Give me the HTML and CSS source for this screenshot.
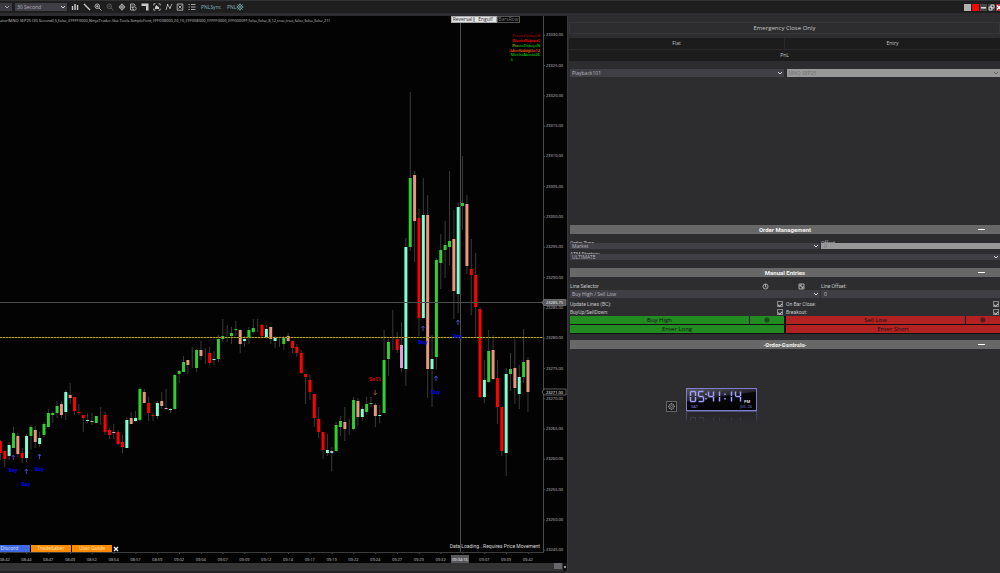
FILE: index.html
```html
<!DOCTYPE html>
<html lang="en">
<head>
<meta charset="utf-8">
<title>Chart Trader</title>
<link rel="stylesheet" href="styles.css">
</head>
<body>
<div class="app">
  <header class="toolbar">
    <button class="drop-stub" aria-label="Instrument"><svg viewBox="0 0 6 6"><path d="M1 2l2 2 2-2"/></svg></button>
    <div class="pick interval"><select aria-label="Interval"><option>30 Second</option></select><svg viewBox="0 0 6 6"><path d="M1 2l2 2 2-2"/></svg></div>
    <nav class="tools">
      <button aria-label="Chart style"><svg viewBox="0 0 8 8"><path class="thick" d="M1.500 3v4M4 1v6M6.500 2v5"/></svg></button>
      <button aria-label="Draw"><svg viewBox="0 0 8 8"><path class="thick" d="M1 1l2 2M3 3l4 4"/></svg></button>
      <button aria-label="Zoom in"><svg viewBox="0 0 8 8"><circle cx="3.300" cy="3.300" r="2.300"/><path d="M5 5l2.500 2.500M2 3.300h2.600M3.300 2v2.600"/></svg></button>
      <button class="dim" aria-label="Zoom out"><svg viewBox="0 0 8 8"><circle cx="3.300" cy="3.300" r="2.300"/><path d="M5 5l2.500 2.500M2 3.300h2.600"/></svg></button>
      <button aria-label="Crosshair"><svg viewBox="0 0 8 8"><circle cx="4" cy="4" r="2.300"/><path d="M4 .5v7M.8 4h6.400"/></svg></button>
      <button aria-label="Data"><svg viewBox="0 0 8 8"><path d="M5 7H1.500V1H5l1 1v1M2.500 3h2M2.500 4.500h1.500"/><circle cx="5.500" cy="5.500" r="1.700"/></svg></button>
      <button aria-label="Chart trader"><svg viewBox="0 0 8 8"><path class="solid" d="M.5.5h7v7H5V3H.5z"/></svg></button>
      <button aria-label="Indicators"><svg viewBox="0 0 8 8"><path d="M.8 2.500V.8h1.700M5.500.8h1.700v1.700M7.200 5.500v1.700H5.500M2.500 7.200H.8V5.500"/><path class="solid" d="M2 6V4l1.500-2L5 3.500l1 .5v2z"/></svg></button>
      <button aria-label="Strategies"><svg viewBox="0 0 8 8"><path d="M1 7l1.500-5 2.500 3 2-4"/><path class="solid" d="M2 1h1.300v1.300H2zM4.400 4.400h1.300v1.300H4.400z"/></svg></button>
      <button aria-label="Properties"><svg viewBox="0 0 8 8"><path d="M1.200 1h5.600v6.200H1.200zM2.500 2.500l3 3M5.500 2.500l-3 3"/></svg></button>
      <button aria-label="List"><svg viewBox="0 0 8 8"><path d="M.5 1.500h1.300M3 1.500h4.500M.5 4h1.300M3 4h4.500M.5 6.500h1.300M3 6.500h4.500"/></svg></button>
    </nav>
    <button class="pnl">PNLSync</button>
    <button class="pnl second">PNL<svg viewBox="0 0 8 8"><circle cx="4" cy="4" r="2.200"/><circle cx="4" cy="4" r=".6"/><path d="M4 .5v1.500M4 6v1.500M.5 4h1.500M6 4h1.500M1.500 1.500l1 1M5.500 5.500l1 1M1.500 6.500l1-1M5.500 2.500l1-1"/></svg></button>
    <div class="window-buttons">
      <button class="swatch grey" aria-label="Link instrument"></button>
      <button class="swatch red" aria-label="Link interval"></button>
      <button class="win" aria-label="Minimize"><svg viewBox="0 0 7 7"><path class="thick" d="M1 3.800h5"/></svg></button>
      <button class="win" aria-label="Restore"><svg viewBox="0 0 7 7"><path d="M3 1h3v3H3zM1 3h3v3H1z"/></svg></button>
      <button class="close" aria-label="Close"><svg viewBox="0 0 7 7"><path class="thick" d="M1 1.500l4 4M5 1.500l-4 4"/></svg></button>
    </div>
  </header>

  <main class="workspace">
    <section class="chart">
      <svg id="plot" class="plot" viewBox="0 16 567 547" preserveAspectRatio="xMinYMin meet" role="img" aria-label="MNQ SEP25 30 second chart"></svg>
      <div class="filters">
        <button class="on">Reversal</button><button class="on">Engulf</button><button>BarsRow</button>
      </div>
      <div class="links">
        <a class="discord" href="#">Discord</a><a href="#">TradeSaber</a><a href="#">User Guide</a>
        <button aria-label="Close links"><svg viewBox="0 0 6 6"><path d="M1 1l4 4M5 1L1 5"/></svg></button>
      </div>
      <div class="scrollbar"><span class="thumb"></span><button aria-label="Fixed scale"><svg viewBox="0 0 4 4"><path d="M1.500 1.500h1v1h-1z"/></svg></button></div>
    </section>

    <aside class="panel">
      <button class="emergency">Emergency Close Only</button>
      <div class="position">
        <span>Flat</span><span>Entry</span>
        <span class="wide">PnL</span>
      </div>
      <div class="accounts">
        <div class="pick"><select aria-label="Account"><option>Playback101</option></select><svg viewBox="0 0 6 6"><path d="M1 2l2 2 2-2"/></svg></div>
        <div class="pick off"><select aria-label="Instrument" disabled><option>MNQ SEP25</option></select><svg viewBox="0 0 6 6"><path d="M1 2l2 2 2-2"/></svg></div>
      </div>

      <h2 class="bar"><span>Order Management</span><button aria-label="Collapse Order Management"></button></h2>
      <div class="fields management">
        <div class="field tight"><label for="type">Order Type</label><div class="pick"><select id="type"><option>Market</option></select><svg viewBox="0 0 6 6"><path d="M1 2l2 2 2-2"/></svg></div></div>
        <div class="field tight"><label for="offset">Offset</label><input id="offset" class="off" value="0" disabled></div>
        <div class="field tight full"><label for="atm">ATM Strategy</label><div class="pick"><select id="atm"><option>ULTIMATE</option></select><svg viewBox="0 0 6 6"><path d="M1 2l2 2 2-2"/></svg></div></div>
      </div>

      <h2 class="bar"><span>Manual Entries</span><button aria-label="Collapse Manual Entries"></button></h2>
      <div class="fields entries">
        <div class="field"><div class="caption"><label for="line">Line Selector</label>
          <button aria-label="Timer"><svg viewBox="0 0 7 7"><circle cx="3.500" cy="3.500" r="2.500"/><path d="M3.500 1v3h1"/></svg></button>
          <button aria-label="Flip"><svg viewBox="0 0 7 7"><path d="M1 1h5v5H1zM2 2l3 3M2 4v-2h2M5 3v2H3"/></svg></button></div>
          <div class="pick"><select id="line"><option>Buy High / Sell Low</option></select><svg viewBox="0 0 6 6"><path d="M1 2l2 2 2-2"/></svg></div></div>
        <div class="field"><div class="caption"><label for="loff">Line Offset:</label></div><input id="loff" value="0"></div>
      </div>
      <div class="checks">
        <label>Update Lines (BC):<input type="checkbox" checked></label>
        <label>On Bar Close:<input type="checkbox" checked></label>
        <label>BuyUp/SellDown:<input type="checkbox" checked></label>
        <label>Breakout:<input type="checkbox" checked></label>
      </div>
      <div class="orders">
        <div class="side buy">
          <button>Buy High</button><button aria-label="Buy target"><svg viewBox="0 0 7 7"><circle cx="3.500" cy="3.500" r="2.500"/><circle cx="3.500" cy="3.500" r="1"/></svg></button>
          <button class="full">Enter Long</button>
        </div>
        <div class="side sell">
          <button>Sell Low</button><button aria-label="Sell target"><svg viewBox="0 0 7 7"><circle cx="3.500" cy="3.500" r="2.500"/><circle cx="3.500" cy="3.500" r="1"/></svg></button>
          <button class="full">Enter Short</button>
        </div>
      </div>

      <h2 class="bar last"><span><s>&nbsp;Order Controls&nbsp;</s></span><button aria-label="Collapse Order Controls"></button></h2>

      <div class="clock-row">
        <button class="gear" aria-label="Clock settings"><svg viewBox="0 0 10 10"><circle cx="5" cy="5" r="3"/><circle cx="5" cy="5" r="1.200"/><path d="M5 1v1.500M5 7.500V9M1 5h1.500M7.500 5H9M2 2l1 1M7 7l1 1M2 8l1-1M7 3l1-1"/></svg></button>
        <div class="clock-stack">
          <div class="clock">
            <div class="time"><svg id="digits" viewBox="0 0 55 13" role="img" aria-label="05:41:14"></svg><span class="pm">PM</span></div>
            <div class="day"><span>SAT</span><span>JUL 26</span></div>
          </div>
          <svg id="mirror" class="mirror" viewBox="0 0 71 12" aria-hidden="true"></svg>
        </div>
      </div>
    </aside>
  </main>
</div>
<script src="chart.js"></script>
</body>
</html>
```
FILE: styles.css
```css
* { box-sizing: border-box; }
body { margin: 0; background: #2d2d30; color: #c4c4c4; font: 5px/6px "Open Sans", "Noto Sans", sans-serif; }
button, select, input { font: inherit; color: inherit; margin: 0; padding: 0; border: 0; border-radius: 0; background: none; }
svg { display: block; fill: none; stroke: currentColor; stroke-width: 0.8; }
.app { display: flex; flex-direction: column; min-height: 100vh; }

.toolbar { display: flex; align-items: center; height: 13px; border-top: 1px solid #333335; background: #1e1e1e; }
.toolbar svg { width: 8px; height: 8px; }
.toolbar .thick { stroke-width: 1.4; }
.toolbar .solid { fill: currentColor; stroke: none; }
.toolbar .drop-stub { width: 12px; height: 8px; padding-left: 4px; background: #3c3b41; }
.toolbar .drop-stub svg, .toolbar .pick svg, .pick svg { width: 6px; height: 6px; }
.pick { position: relative; display: flex; height: 8px; background: #403f46; color: #b4b4b8; }
.pick select { appearance: none; flex: 1; padding-left: 2px; opacity: 1; }
.pick svg { position: absolute; right: 1px; top: 1px; pointer-events: none; stroke: #d8d8d8; stroke-width: 1; }
.interval { width: 52px; margin-left: 3px; }
.tools { display: flex; justify-content: space-between; width: 125px; margin-left: 4px; color: #c9c9c9; }
.dim { color: #666; }
.pnl { display: flex; align-items: center; margin-left: 5px; color: #88b4bc; }
.second { margin-left: 6px; }
.window-buttons { display: flex; gap: 1px; margin-left: auto; overflow: hidden; width: 36px; }
.window-buttons button { flex: none; width: 7px; height: 7px; }
.window-buttons svg { width: 7px; height: 7px; }
.swatch.grey { background: #b0b0b0; }
.swatch.red { background: #f00; }
.win { background: #47474a; color: #eee; }
.close { background: #bc3036; color: #fff; }

.workspace { flex: 1; display: grid; grid-template-columns: 567fr 433fr; padding-top: 3px; }
.chart { position: relative; display: flex; flex-direction: column; background: #030303; }
.plot { width: 100%; stroke: none; }
.plot text { font: 4px "Open Sans", sans-serif; fill: #c4c4c4; }
.plot .mid { text-anchor: middle; }
.plot .end { text-anchor: end; }
.plot .loading { font: 5px Roboto, sans-serif; fill: #d8d8d8; text-anchor: end; }
.plot .mono { font: bold 5px "Liberation Mono", monospace; text-anchor: middle; }
.plot .wick { fill: #3a3a3a; }
.plot .rule { fill: #4c4c4c; }

.filters { position: absolute; top: 0; left: 451px; display: flex; }
.filters button { width: 23px; height: 7px; border: 1px solid #555; color: #808080; line-height: 5px; }
.filters .on { background: #e2e2e2; border-color: #aaa; color: #333; }
.links { position: absolute; bottom: 21px; left: 0; display: flex; height: 7px; gap: 1px; }
.links a { width: 40px; background: #ff8c00; color: #ffe6c4; text-align: center; text-decoration: none; line-height: 7px; }
.links .discord { width: 30px; padding-right: 11px; background: #4169e1; color: #d8e0ff; }
.links svg { width: 6px; height: 6px; color: #fff; stroke-width: 1.3; }
.scrollbar { flex: 1; display: flex; justify-content: flex-end; gap: 1px; min-height: 8px; border-bottom: 2px solid #242426; background: #333; }
.thumb { width: 8px; height: 6px; background: #68686c; }
.scrollbar button { width: 4px; background: #111; color: #ddd; }
.scrollbar svg { width: 4px; height: 4px; }

.panel { display: flex; flex-direction: column; padding: 6px 0 0 2px; border-left: 1px solid #3a3a3c; }
.emergency { height: 12px; margin-left: -1px; border: 1px solid #363638; font-size: 6px; line-height: 8px; }
.position { display: grid; grid-template-columns: 1fr 1fr; grid-auto-rows: 11px; gap: 1px; margin: 4px 0 0 -1px; background: #29292b; line-height: 11px; text-align: center; }
.position span { background: #1c1c1c; }
.wide, .full { grid-column: 1 / -1; }
.accounts { display: grid; grid-template-columns: 1fr 1fr; gap: 3px; padding-top: 8px; margin-bottom: 148px; }
.pick.off { background: #999; color: #707070; }
.pick.off svg { stroke: #666; }

.bar { display: flex; align-items: center; height: 9px; margin: 0; background: #686868; color: #f4f4f4; font: bold 6px/9px Roboto, sans-serif; position: relative; }
.bar span { flex: 1; text-align: center; }
.bar s { text-decoration-thickness: 1px; text-decoration-color: #b4b4b4; }
.bar button { position: absolute; right: 15px; top: 4px; width: 7px; height: 1px; background: #fff; }
.fields { display: grid; grid-template-columns: 250fr 179fr; column-gap: 1px; }
.field { display: flex; flex-direction: column; min-width: 0; }
.field label, .checks { font-family: Roboto, sans-serif; }
.field input { position: relative; height: 8px; width: 100%; padding-left: 3px; background: #403f46; }
.management { padding-top: 6px; row-gap: 1px; margin-bottom: 8px; }
.tight label { height: 3px; }
.tight .pick, .tight input { height: 6px; line-height: 6px; }
.tight .pick svg { top: 0; }
.field input.off { background: #999; color: #707070; }
.management .full { padding-top: 1px; }
.entries { padding-top: 5px; }
.caption { display: flex; align-items: center; gap: 29px; height: 8px; }
.caption label { flex: 1; }
.caption svg { width: 7px; height: 7px; }
.caption button:last-child { margin-right: 15px; }
.checks { display: grid; grid-template-columns: 1fr 1fr; column-gap: 2px; grid-auto-rows: 8px; padding-top: 2px; }
.checks label { display: flex; align-items: center; justify-content: space-between; padding-right: 1px; }
.checks input { appearance: none; width: 6px; height: 6px; border: 1px solid #888; background: #333; display: grid; place-items: center; }
.checks input:checked::before { content: ""; width: 3px; height: 2px; border-left: 1px solid #bbb; border-bottom: 1px solid #bbb; transform: rotate(-45deg); }
.orders { display: grid; grid-template-columns: 1fr 1fr; gap: 2px; padding-bottom: 1px; background: #101010; color: #101010; font-size: 6px; line-height: 8px; }
.side { display: grid; grid-template-columns: 179fr 34fr; gap: 1px; }
.side button { height: 8px; display: grid; place-items: center; }
.side svg { width: 6px; height: 6px; }
.buy button { background: #228b22; }
.sell button { background: #b22222; }
.last { margin-top: 6px; }

.clock-row { display: flex; align-items: flex-start; gap: 9px; padding: 39px 0 0 96px; }
.gear { width: 11px; height: 11px; margin-top: 13px; border: 1px solid #666; background: #1c1c1c; color: #999; }
.gear svg { width: 9px; height: 9px; }
.clock-stack { width: 71px; }
.clock { height: 23px; padding: 1px 2px; border: 1px solid #7f7ccf; background: linear-gradient(172deg, #55555c 0, #25252b 38%, #08080c 42%, #020204 100%); color: #8a86e0; font-size: 4px; line-height: 5px; }
.time { display: flex; align-items: flex-end; height: 14px; }
.clock svg { width: 55px; height: 13px; margin-bottom: 1px; stroke: #a19eff; stroke-width: 1.5; }
.pm { color: #ddd; font-weight: bold; }
.day { display: flex; justify-content: space-between; padding: 0 2px; }
.mirror { width: 71px; height: 12px; stroke: #6a68a8; stroke-width: 1; background: #222226; opacity: 0.6; mask-image: linear-gradient(#000, transparent); }
```
FILE: chart.js
```js
const NS = "http://www.w3.org/2000/svg";
const plot = document.getElementById("plot");

function add(parent, name, attrs, text) {
  const el = document.createElementNS(NS, name);
  for (const key in attrs) el.setAttribute(key, attrs[key]);
  if (text !== undefined) el.textContent = text;
  parent.appendChild(el);
  return el;
}
const rect = (x, y, width, height, attrs) => add(plot, "rect", { x, y, width, height, ...attrs });
const label = (x, y, text, attrs) => add(plot, "text", { x, y, ...attrs }, text);

const colours = { r: "#ff0000", g: "#32cd32", a: "#7fffd4", s: "#e9967a", p: "#dda0dd", b: "#b0c4de" };

// Each bar: colour, high, body top, body bottom, low. A bar with no body is "n".
const bars = `r 440 441 453 460|r 451 451 459 467|a 442 445 456 460|g 427 433 448 448|s 433 436 454 457|r 448 453 458 463|a 434 436 458 462|g 425 427 436 450|s 426 430 442 448|a 432 438 444 447
g 422 424 435 437|g 409 413 427 427|g 412 413 415 423|g 401 406 413 418|s 401 404 415 418|a 390 392 412 420|s 383 395 398 404|r 397 397 411 415|r 404 412 413 415|r 415 415 418 432
a 413 420 421 423|b 413 421 422 425|g 416 416 423 423|n 407 0 0 425|r 412 415 432 435|r 428 430 435 439|p 424 432 433 439|r 430 432 444 445|r 435 442 447 453|a 417 420 448 448
s 412 418 424 424|a 411 418 421 422|g 387 389 420 421|s 389 392 403 403|r 397 403 413 421|r 413 415 416 421|a 401 403 416 419|s 392 401 406 409|p 389 408 409 410|a 408 409 410 413
g 374 375 409 409|g 370 371 374 383|g 356 362 372 372|s 360 360 365 374|n 347 0 0 368|g 349 350 368 372|s 341 350 356 360|n 348 0 0 364|r 347 353 363 365|a 351 359 360 365
g 335 339 359 362|g 319 336 339 342|n 325 0 0 342|g 327 333 336 344|g 321 329 330 336|s 329 330 344 353|a 336 339 341 347|g 327 330 338 344|g 319 328 332 333|n 319 0 0 332
r 324 325 336 338|a 325 329 338 339|s 327 327 339 344|a 336 338 341 348|n 338 0 0 347|g 336 338 344 350|s 333 336 341 342|r 341 341 348 353|r 344 347 353 357|r 350 353 373 374
r 374 374 377 404|r 375 380 392 400|r 394 394 418 427|r 407 419 432 438|r 432 432 450 459|a 434 450 453 456|b 447 451 453 471|g 422 425 451 452|g 416 421 427 436|s 407 422 429 441
n 419 0 0 435|g 397 400 429 430|s 398 401 417 426|a 406 409 417 421|g 397 404 412 415|g 397 403 404 407|s 403 405 416 427|a 405 415 416 423|g 330 360 413 413|g 339 342 359 376
n 310 0 0 350|r 332 339 350 353|p 322 345 368 372|a 238 247 369 386|g 92 178 247 251|s 171 175 221 262|r 209 218 318 336|a 178 215 318 319|s 195 215 369 398|a 335 359 369 407
g 258 260 357 369|g 234 250 263 289|g 221 245 250 278|g 171 241 247 265|s 210 239 291 319|a 203 207 294 313|g 156 203 206 230|s 195 204 266 274|r 239 269 275 315|r 253 275 307 338
r 307 309 397 398|a 360 380 397 403|g 330 351 382 383|s 335 350 379 380|r 360 378 407 424|r 407 407 451 456|a 368 374 453 476|g 353 369 374 391|s 339 368 388 404|a 365 377 394 409
g 329 362 377 383|s 357 360 392 412`.split(/[|\n]/).map(row => row.split(" "));

bars.forEach(([c, high, top, bottom, low], i) => {
  const x = 0.4 + i * 4.36;
  rect(x - 0.5, +high, 1, low - high, { class: "wick" });
  if (c !== "n") rect(x - 1.5, +top, 3, bottom - top, { fill: colours[c] });
});

// Price line, crosshair and axes
rect(0, 337, 543, 1, { fill: "#5e5708" });
add(plot, "path", { d: "M0 337.500H543", stroke: "#b5a820", "stroke-width": 1, "stroke-dasharray": "2 1" });
rect(0, 302, 543, 1, { class: "rule" });
rect(460, 16, 1, 537, { class: "rule" });
rect(543, 16, 1, 537, { class: "rule" });
rect(0, 552, 544, 1, { fill: "#3c3c3c" });

for (let i = 0; i < 18; i++) {
  const y = 34.7 + i * 30.3;
  rect(544, y, 1, 1, { class: "rule" });
  label(546, y + 1.5, (23330 - i * 5) + ".00");
}
const times = "08:42 08:44 08:47 08:49 08:52 08:54 08:57 08:59 09:02 09:04 09:07 09:09 09:12 09:14 09:17 09:19 09:22 09:24 09:27 09:29 09:32 09:34 09:37 09:39 09:42".split(" ");
times.forEach((time, i) => {
  const x = 4.6 + i * 21.8;
  rect(x, 553, 1, 1, { class: "rule" });
  if (time !== "09:34") label(x, 561, time, { class: "mid" });
});
rect(451, 555, 18, 8, { fill: "#57575c" });
label(460, 561, "09:34:16", { class: "mid", style: "fill:#fff" });
add(plot, "path", { d: "M542 302.500l2-3h22v6h-22z", fill: "#57575c", stroke: "#888", "stroke-width": 0.7 });
label(546, 304, "23285.75", { style: "fill:#fff" });
add(plot, "path", { d: "M542 392l2-3h22v6h-22z", fill: "#030303", stroke: "#888", "stroke-width": 0.7 });
label(546, 394, "23271.00", { style: "fill:#fff" });

// Signals
const arrow = (x, y, dir, stroke) => add(plot, "path", { d: `M${x} ${y - 2}v5M${x - 1.5} ${dir < 0 ? y : y + 1}l1.500 ${2 * dir}l1.500 ${-2 * dir}`, stroke, "stroke-width": 0.9, fill: "none" });
[[13.3, 457, 472], [26.3, 471, 486], [39.5, 456, 471], [423, 328, 344], [458, 322, 338], [436, 378, 394]].forEach(([x, y, ty]) => {
  arrow(x, y, -1, "#4848d0");
  label(x, ty, "Buy", { class: "mono", style: "fill:#0000ff" });
});
arrow(375.2, 392, 1, "#b04040");
label(375, 381, "Sell", { class: "mono", style: "fill:#f00000" });

label(0, 21.5, "ator(MNQ SEP25 (30 Second),5,false,#FFFF0000,NinjaTrader.Gui.Tools.SimpleFont,#FF008000,20,10,#FF008000,#FFFF0000,#FF0000FF,false,false,8,12,true,true,false,false,false,21)");
[[37, "PrecioDebajoN", "#d00000"], [42, "MechaBajistaC", "#ff0000"], [41.6, "PrecioDebajoC", "#e00000"], [46.5, "PrecioDebajoN", "#00e000"], [46.5, "Pre", "#e07000", 519],
 [51.5, "MechaBajista12", "#ff0000"], [51.5, "IaberNiddgDo12", "#c08000"], [56, "MechaAlcista26", "#00f000"], [61, "6", "#00d000", 513]]
  .forEach(([y, text, fill, x = 540]) => label(x, y, text, { class: "end", style: "fill:" + fill }));
label(540, 548, "Data Loading...Requires Price Movement", { class: "loading" });

// Seven-segment clock face: segments a-g per digit
const seg = { a: "M.500.500h5", b: "M5.500.500v4.500", c: "M5.500 6v4.500", d: "M.500 10.500h5", e: "M.500 6v4.500", f: "M.500.500v4.500", g: "M.500 5.500h5" };
const shapes = { 0: "abcdef", 5: "acdfg", 4: "bcfg", 1: "bc" };
function face(svg, transform) {
  const g = add(svg, "g", { transform });
  [["0", 1], ["5", 9], ["4", 19], ["1", 25], ["1", 37], ["4", 46]].forEach(([n, x]) =>
    [...shapes[n]].forEach(s => add(g, "path", { d: seg[s], transform: `translate(${x} 1)` })));
  [17, 36].forEach(x => add(g, "path", { d: `M${x} 3.500v1.500M${x} 8v1.500` }));
}
face(document.getElementById("digits"), "");
const mirror = document.getElementById("mirror");
add(mirror, "path", { d: "M.5 12V0M70.500 0v12M0 .5h71" });
face(mirror, "translate(3 17) scale(1 -.9)");
```
